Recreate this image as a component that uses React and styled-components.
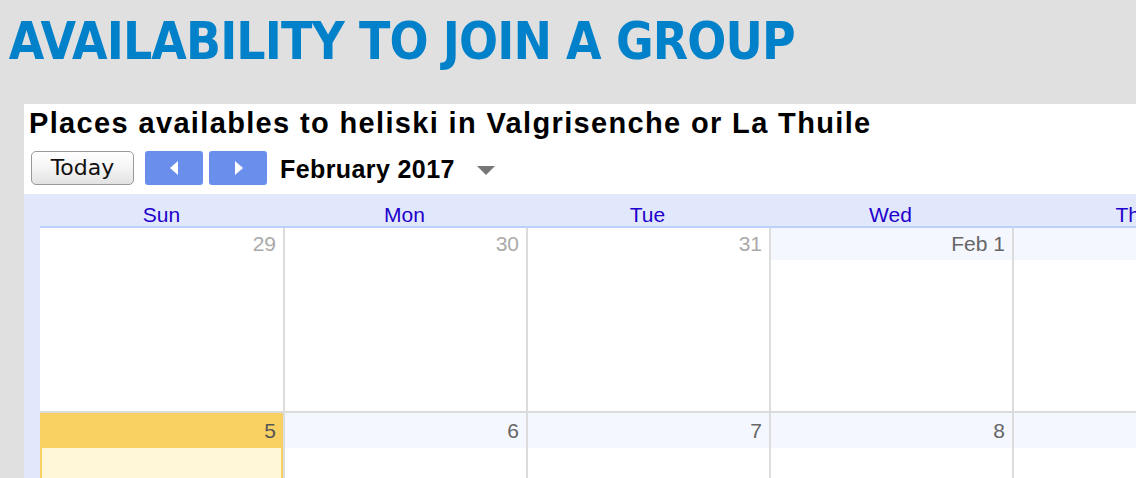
import React from "react"
import styled, { createGlobalStyle } from "styled-components"

const GlobalStyle = createGlobalStyle`
  html, body {
    margin: 0;
    background: #e0e0e0;
    overflow: hidden;
  }
`

const days = ["Sun", "Mon", "Tue", "Wed", "Thu", "Fri", "Sat"]

const weeks = [
  [
    { label: "29", other: true },
    { label: "30", other: true },
    { label: "31", other: true },
    { label: "Feb 1" },
    { label: "2" },
    { label: "3" },
    { label: "4" },
  ],
  [
    { label: "5", today: true },
    { label: "6" },
    { label: "7" },
    { label: "8" },
    { label: "9" },
    { label: "10" },
    { label: "11" },
  ],
]

const App = () => {
  return (
    <Page>
      <GlobalStyle />
      <Heading>AVAILABILITY TO JOIN A GROUP</Heading>
      <Panel>
        <Title>Places availables to heliski in Valgrisenche or La Thuile</Title>
        <Toolbar>
          <TodayButton>Today</TodayButton>
          <NavButton aria-label="previous">
            <svg width="9" height="14" viewBox="0 0 9 14">
              <path d="M8 0 L0 7 L8 14 Z" fill="#fff" />
            </svg>
          </NavButton>
          <NavButton aria-label="next">
            <svg width="9" height="14" viewBox="0 0 9 14">
              <path d="M1 0 L9 7 L1 14 Z" fill="#fff" />
            </svg>
          </NavButton>
          <Month>February 2017</Month>
          <Dropdown>
            <svg width="18" height="10" viewBox="0 0 18 10">
              <path d="M0 0 L18 0 L9 9 Z" fill="#777" />
            </svg>
          </Dropdown>
        </Toolbar>
        <Frame>
          <DayNames>
            {days.map((d) => (
              <DayName key={d}>{d}</DayName>
            ))}
          </DayNames>
          {weeks.map((week, i) => (
            <Week key={i} first={i === 0}>
              {week.map((cell, j) => (
                <Cell key={cell.label} lead={j === 0}>
                  <DateStrip first={i === 0} other={cell.other} today={cell.today}>
                    {cell.label}
                  </DateStrip>
                  <CellBody today={cell.today} />
                </Cell>
              ))}
            </Week>
          ))}
        </Frame>
      </Panel>
    </Page>
  )
}
export default App

const Page = styled.div`
  width: 1136px;
  height: 478px;
  overflow: hidden;
`

const Heading = styled.h1`
  margin: 0;
  height: 104px;
  box-sizing: border-box;
  padding: 11px 0 0 10px;
  font-family: "DejaVu Sans", sans-serif;
  font-weight: bold;
  font-size: 52px;
  letter-spacing: -1px;
  color: #0081c9;
  white-space: nowrap;
  transform: scaleX(0.884);
  transform-origin: left top;
`

const Panel = styled.div`
  margin-left: 24px;
  background: #fff;
  height: 374px;
  overflow: hidden;
`

const Title = styled.div`
  padding: 3px 0 0 5px;
  height: 44px;
  box-sizing: border-box;
  font-family: "Liberation Sans", Arial, sans-serif;
  font-weight: bold;
  font-size: 29px;
  letter-spacing: 1.35px;
  color: #000;
  white-space: nowrap;
`

const Toolbar = styled.div`
  display: flex;
  align-items: center;
  height: 46px;
  padding: 3px 0 9px 7px;
  box-sizing: border-box;
`

const TodayButton = styled.button`
  width: 103px;
  height: 34px;
  border: 1px solid #999;
  border-radius: 5px;
  background: linear-gradient(#ffffff, #f4f4f4 50%, #e2e2e2);
  font-family: "DejaVu Sans", sans-serif;
  font-size: 22px;
  color: #111;
  padding: 0 0 1px;
  margin-right: 11px;
`

const NavButton = styled.button`
  width: 58px;
  height: 34px;
  border: none;
  border-radius: 3px;
  background: #6a8eeb;
  display: flex;
  align-items: center;
  justify-content: center;
  padding: 0;
  margin-right: 6px;
`

const Month = styled.div`
  margin-left: 7px;
  padding-top: 3px;
  font-family: "Liberation Sans", Arial, sans-serif;
  font-weight: bold;
  font-size: 25px;
  letter-spacing: 0.4px;
  color: #000;
`

const Dropdown = styled.div`
  margin-left: 22px;
  display: flex;
  padding-top: 6px;
`

const Frame = styled.div`
  background: #e1e8fc;
  padding-left: 16px;
  width: 1720px;
`

const DayNames = styled.div`
  display: grid;
  grid-template-columns: repeat(7, 243px);
  height: 32px;
  border-bottom: 2px solid #bcd0fa;
`

const DayName = styled.div`
  font-family: "Liberation Sans", Arial, sans-serif;
  font-size: 21px;
  color: #2200cc;
  text-align: center;
  line-height: 42px;
`

const Week = styled.div`
  display: grid;
  grid-template-columns: repeat(7, 243px);
  height: ${(p) => (p.first ? "183px" : "185px")};
  background: #fff;
  border-bottom: 2px solid #dcdcdc;
`

const Cell = styled.div`
  border-left: ${(p) => (p.lead ? "none" : "2px solid #dcdcdc")};
  display: flex;
  flex-direction: column;
`

const DateStrip = styled.div`
  height: ${(p) => (p.first ? "32px" : "35px")};
  box-sizing: border-box;
  padding: ${(p) => (p.first ? "4px" : "6px")} 7px 0 0;
  text-align: right;
  font-family: "Liberation Sans", Arial, sans-serif;
  font-size: 21px;
  color: ${(p) => (p.other ? "#aaa" : p.today ? "#555" : "#666")};
  background: ${(p) => (p.today ? "#f9d062" : p.other ? "#fff" : "#f5f7fe")};
`

const CellBody = styled.div`
  flex: 1;
  box-sizing: border-box;
  background: ${(p) => (p.today ? "#fff7d7" : "#fff")};
  border-left: ${(p) => (p.today ? "2px solid #f9d062" : "none")};
  border-right: ${(p) => (p.today ? "2px solid #f9d062" : "none")};
`
